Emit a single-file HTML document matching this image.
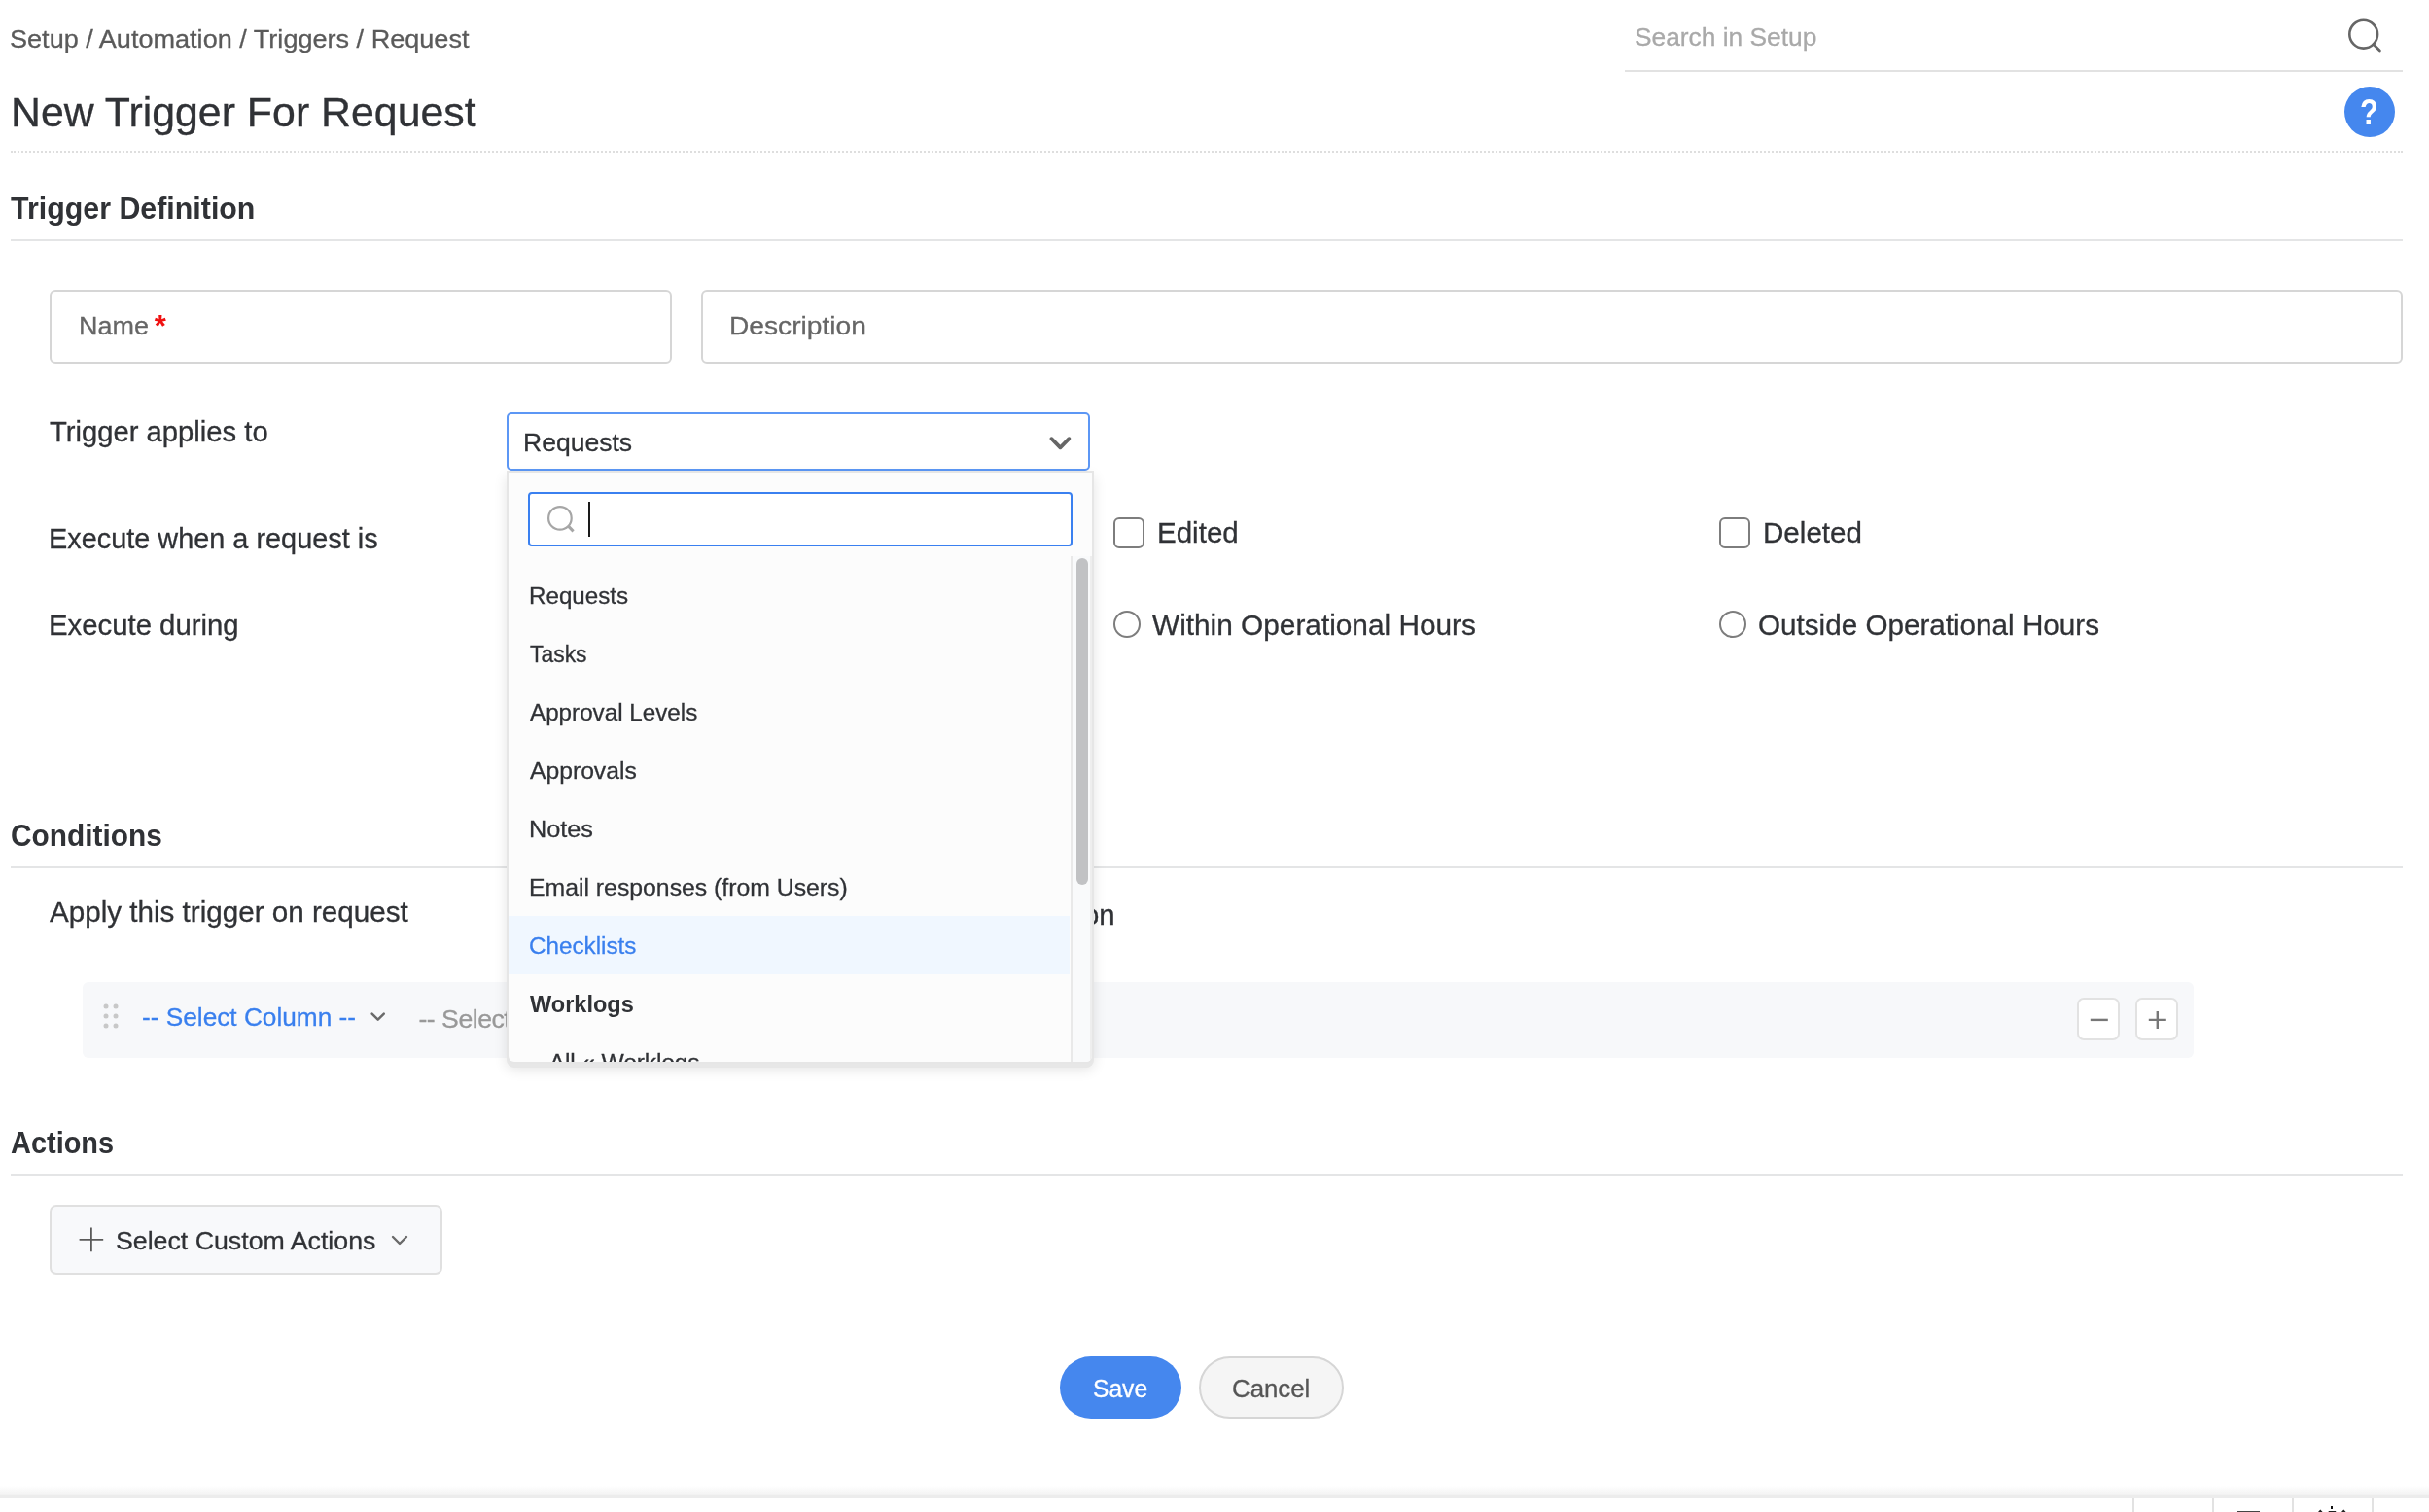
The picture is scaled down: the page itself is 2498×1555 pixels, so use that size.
<!DOCTYPE html>
<html lang="en">
<head>
<meta charset="utf-8">
<title>New Trigger For Request</title>
<style>
html,body{margin:0;padding:0;background:#fff;}
body{width:2498px;height:1555px;position:relative;overflow:hidden;font-family:"Liberation Sans",sans-serif;}
.t{position:absolute;white-space:nowrap;line-height:1;-webkit-text-stroke:0.3px;transform-origin:0 0;}
.b{position:absolute;box-sizing:border-box;}
#page{position:absolute;left:0;top:0;width:2498px;height:1555px;will-change:transform;}
svg{position:absolute;overflow:visible;}
h1,h2,ul,li,p{margin:0;padding:0;font-weight:400;list-style:none;}
</style>
</head>
<body>
<div id="page">
<header>
<nav class="t" aria-label="Breadcrumb" style="left:10.4px;top:27.4px;font-size:26.6px;color:#5a5a5a;transform:scaleX(1.0179);">Setup / Automation / Triggers / Request</nav>
<div class="t" style="left:1680.7px;top:24.5px;font-size:26.6px;color:#a9a9a9;transform:scaleX(0.9899);">Search in Setup</div>
<div class="b" style="left:1671px;top:72px;width:800px;height:2px;background:#e2e2e2;"></div>
<svg style="left:2410px;top:15px" width="44" height="44" viewBox="0 0 44 44"><circle cx="20.7" cy="20.2" r="14.4" fill="none" stroke="#666" stroke-width="2.6"/><path d="M30.8 30.6 L37.4 37.0" stroke="#666" stroke-width="2.8" stroke-linecap="round" fill="none"/></svg>
<h1 class="t" style="left:10.6px;top:93.7px;font-size:43.3px;color:#303236;transform:scaleX(0.9896);">New Trigger For Request</h1>
<div class="b" style="left:2410.7px;top:89px;width:52px;height:52px;border-radius:50%;background:#4587ee;"></div>
<div class="t" style="left:2425.4px;top:96.6px;font-size:37.5px;color:#fff;letter-spacing:0px;font-weight:700;transform:scaleX(0.82);transform-origin:50% 50%;-webkit-text-stroke:0;">?</div>
<div class="b" style="left:11px;top:155px;width:2460px;height:0;border-top:2px dotted #dedede;"></div>
</header>
<main>
<section aria-label="Trigger Definition">
<h2 class="t" style="left:11.1px;top:198.5px;font-size:31.2px;color:#303236;transform:scaleX(0.9739);font-weight:700;-webkit-text-stroke:0;">Trigger Definition</h2>
<div class="b" style="left:11px;top:246px;width:2460px;height:2px;background:#e4e5e6;"></div>
<div class="b" style="left:51px;top:298px;width:640px;height:76px;border:2px solid #d6d6d6;border-radius:6px;background:#fff;"></div>
<div class="t" style="left:81.0px;top:322.2px;font-size:26.6px;color:#666;transform:scaleX(1.013);">Name</div>
<div class="t" style="left:158.7px;top:320.4px;font-size:31px;color:#f01010;letter-spacing:0px;font-weight:700;-webkit-text-stroke:0;">*</div>
<div class="b" style="left:721px;top:298px;width:1750px;height:76px;border:2px solid #d6d6d6;border-radius:6px;background:#fff;"></div>
<div class="t" style="left:749.6px;top:322.2px;font-size:26.6px;color:#666;transform:scaleX(1.0585);">Description</div>
<label class="t" style="left:50.9px;top:429.5px;font-size:28.7px;color:#303236;transform:scaleX(1.0186);">Trigger applies to</label>
<label class="t" style="left:50.4px;top:539.9px;font-size:28.7px;color:#303236;transform:scaleX(1.0063);">Execute when a request is</label>
<label class="t" style="left:50.4px;top:628.7px;font-size:28.7px;color:#303236;transform:scaleX(1.0223);">Execute during</label>
<div class="b" style="left:1145px;top:532px;width:32px;height:32px;border:2px solid #7d7d7d;border-radius:6px;background:#fff;"></div>
<label class="t" style="left:1189.6px;top:534.2px;font-size:28.7px;color:#303236;transform:scaleX(1.0295);">Edited</label>
<div class="b" style="left:1768px;top:532px;width:32px;height:32px;border:2px solid #7d7d7d;border-radius:6px;background:#fff;"></div>
<label class="t" style="left:1813.4px;top:534.2px;font-size:28.7px;color:#303236;transform:scaleX(1.0312);">Deleted</label>
<div class="b" style="left:1145px;top:628px;width:28px;height:28px;border:2px solid #7d7d7d;border-radius:50%;background:#fff;"></div>
<label class="t" style="left:1185.0px;top:628.7px;font-size:28.7px;color:#303236;transform:scaleX(1.0388);">Within Operational Hours</label>
<div class="b" style="left:1768px;top:628px;width:28px;height:28px;border:2px solid #7d7d7d;border-radius:50%;background:#fff;"></div>
<label class="t" style="left:1808.0px;top:628.7px;font-size:28.7px;color:#303236;transform:scaleX(1.0334);">Outside Operational Hours</label>
</section>
<section aria-label="Conditions">
<h2 class="t" style="left:10.8px;top:844.1px;font-size:31.2px;color:#303236;transform:scaleX(0.9571);font-weight:700;-webkit-text-stroke:0;">Conditions</h2>
<div class="b" style="left:11px;top:891px;width:2460px;height:2px;background:#e4e5e6;"></div>
<div class="t" style="left:51.4px;top:923.6px;font-size:28.7px;color:#303236;transform:scaleX(1.0321);">Apply this trigger on request</div>
<div class="t" style="left:1113.5px;top:926.7px;font-size:28.7px;color:#303236;transform:scaleX(1.0233);">on</div>
<div class="b" style="left:85px;top:1010px;width:2171px;height:78px;border-radius:6px;background:#f7f8fa;"></div>
<svg style="left:106.4px;top:1032.4px" width="16" height="26" viewBox="0 0 16 26"><circle cx="3" cy="3" r="2.5" fill="#c8c8c8"/><circle cx="3" cy="13" r="2.5" fill="#c8c8c8"/><circle cx="3" cy="23" r="2.5" fill="#c8c8c8"/><circle cx="13" cy="3" r="2.5" fill="#c8c8c8"/><circle cx="13" cy="13" r="2.5" fill="#c8c8c8"/><circle cx="13" cy="23" r="2.5" fill="#c8c8c8"/></svg>
<div class="t" style="left:146.4px;top:1032.5px;font-size:26.6px;color:#397fee;transform:scaleX(0.986);">-- Select Column --</div>
<svg style="left:380px;top:1040px" width="18" height="12" viewBox="0 0 18 12"><path d="M2.6 2.6 L8.7 8.6 L14.8 2.6" fill="none" stroke="#6a6a6a" stroke-width="2.5" stroke-linecap="round" stroke-linejoin="round"/></svg>
<div class="t" style="left:430.4px;top:1035.3px;font-size:26.6px;color:#999;letter-spacing:-0.46px;">-- Select</div>
<div class="b" style="left:2136px;top:1026px;width:44px;height:44px;border:2px solid #e2e2e2;border-radius:7px;background:#fff;"></div>
<svg style="left:0;top:0" width="1" height="1"><path d="M2149.8 1048.9 H2167.8" stroke="#777" stroke-width="2.4" fill="none"/></svg>
<div class="b" style="left:2196px;top:1026px;width:44px;height:44px;border:2px solid #e2e2e2;border-radius:7px;background:#fff;"></div>
<svg style="left:0;top:0" width="1" height="1"><path d="M2209.8 1048.9 H2227.8 M2218.8 1039.9 V1057.9" stroke="#777" stroke-width="2.4" fill="none"/></svg>
</section>
<section aria-label="Actions">
<h2 class="t" style="left:11.2px;top:1160.3px;font-size:31.2px;color:#303236;transform:scaleX(0.9281);font-weight:700;-webkit-text-stroke:0;">Actions</h2>
<div class="b" style="left:11px;top:1207px;width:2460px;height:2px;background:#e4e5e6;"></div>
<div class="b" style="left:51px;top:1239px;width:404px;height:72px;border:2px solid #e0e0e0;border-radius:7px;background:#f8f9fb;"></div>
<svg style="left:0;top:0" width="1" height="1"><path d="M81.6 1274.9 H106.2 M93.9 1262.5 V1287.3" stroke="#5a5a5a" stroke-width="1.8" fill="none"/></svg>
<div class="t" style="left:118.6px;top:1263.2px;font-size:26.6px;color:#303236;transform:scaleX(1.0049);">Select Custom Actions</div>
<svg style="left:401px;top:1268.5px" width="20" height="13" viewBox="0 0 20 13"><path d="M3 3 L10 10 L17 3" fill="none" stroke="#6a6a6a" stroke-width="2.4" stroke-linecap="round" stroke-linejoin="round"/></svg>
</section>
<div role="group" aria-label="Form buttons">
<div class="b" style="left:1090px;top:1395px;width:125px;height:64px;border-radius:32px;background:#4587ee;"></div>
<div class="t" style="left:1124.3px;top:1414.5px;font-size:26.6px;color:#fff;transform:scaleX(0.9254);">Save</div>
<div class="b" style="left:1233px;top:1395px;width:149px;height:64px;border-radius:32px;background:#f5f5f5;border:2px solid #d6d6d6;"></div>
<div class="t" style="left:1267.2px;top:1414.5px;font-size:26.6px;color:#555;transform:scaleX(0.9704);">Cancel</div>
</div>
</main>
<footer>
<div class="b" style="left:0;top:1528px;width:2498px;height:10px;background:linear-gradient(to bottom,rgba(255,255,255,0),#f1f1f1);"></div>
<div class="b" style="left:0;top:1538px;width:2498px;height:3px;background:#ececec;"></div>
<div class="b" style="left:0;top:1541px;width:2498px;height:14px;background:#fff;"></div>
<div class="b" style="left:2193px;top:1541px;width:2px;height:14px;background:#e2e2e2;"></div>
<div class="b" style="left:2275px;top:1541px;width:2px;height:14px;background:#e2e2e2;"></div>
<div class="b" style="left:2357px;top:1541px;width:2px;height:14px;background:#e2e2e2;"></div>
<div class="b" style="left:2439px;top:1541px;width:2px;height:14px;background:#e2e2e2;"></div>
<div class="b" style="left:2301px;top:1554px;width:23px;height:1px;background:#444;"></div>
<div class="b" style="left:2397px;top:1549px;width:2px;height:3px;background:#111;"></div>
<svg style="left:0;top:0" width="1" height="1"><path d="M2384 1555 L2386.3 1552.6 L2388.6 1555 Z M2408 1555 L2410.3 1552.6 L2412.6 1555 Z M2394.7 1554 H2402.2 V1555 H2394.7 Z" fill="#222"/></svg>
</footer>
<div role="combobox" aria-label="Trigger applies to" aria-expanded="true">
<div class="b" style="left:521px;top:424px;width:600px;height:60px;border:2px solid #5c97f5;border-radius:5px;background:#fff;"></div>
<div class="t" style="left:537.6px;top:441.8px;font-size:26.6px;color:#303236;transform:scaleX(0.9982);">Requests</div>
<svg style="left:1077px;top:446px" width="27" height="20" viewBox="0 0 27 20"><path d="M4.4 5.2 L13.4 14.3 L22.4 5.2" fill="none" stroke="#666" stroke-width="3.8" stroke-linecap="round" stroke-linejoin="round"/></svg>
<div class="b" style="left:523px;top:486px;width:600px;height:606px;background:#fcfcfc;border-radius:0 0 6px 6px;box-shadow:0 0 0 2px #e6e6e6,0 4px 0 2px #e7e7e7,0 6px 14px 2px rgba(0,0,0,0.11);overflow:hidden;">
<div class="b" style="left:20px;top:20px;width:560px;height:56px;border:2px solid #3a80f0;border-radius:4px;background:#fff;"></div>
<svg style="left:37px;top:32px" width="34" height="32" viewBox="0 0 34 32"><circle cx="15.9" cy="14.9" r="11.8" fill="none" stroke="#a6a6a6" stroke-width="2.2"/><path d="M24 22.6 L29.6 28.4" stroke="#a6a6a6" stroke-width="3" fill="none"/></svg>
<div class="b" style="left:82px;top:30px;width:2px;height:36px;background:#1a1a1a;"></div>
<div class="b" style="left:0;top:456px;width:577px;height:60px;background:#f0f7ff;"></div>
<ul role="listbox">
<li class="t" role="option" style="left:20.6px;top:115.0px;font-size:24.6px;color:#303236;transform:scaleX(0.9825);">Requests</li>
<li class="t" role="option" style="left:21.6px;top:175.0px;font-size:24.6px;color:#303236;transform:scaleX(0.9317);">Tasks</li>
<li class="t" role="option" style="left:21.6px;top:235.0px;font-size:24.6px;color:#303236;transform:scaleX(0.9846);">Approval Levels</li>
<li class="t" role="option" style="left:21.6px;top:295.0px;font-size:24.6px;color:#303236;transform:scaleX(1.0037);">Approvals</li>
<li class="t" role="option" style="left:20.6px;top:355.0px;font-size:24.6px;color:#303236;transform:scaleX(1.027);">Notes</li>
<li class="t" role="option" style="left:20.6px;top:415.0px;font-size:24.6px;color:#303236;transform:scaleX(1.0077);">Email responses (from Users)</li>
<li class="t" role="option" style="left:20.6px;top:475.0px;font-size:24.6px;color:#397fee;transform:scaleX(0.9856);">Checklists</li>
<li class="t" role="option" style="left:21.6px;top:535.0px;font-size:24.6px;color:#303236;transform:scaleX(0.9568);font-weight:700;-webkit-text-stroke:0;">Worklogs</li>
<li class="t" role="option" style="left:41.8px;top:595.0px;font-size:24.6px;color:#303236;letter-spacing:-0.15px;">All « Worklogs</li>
</ul>
<div class="b" style="left:578px;top:86px;width:2px;height:520px;background:#e9e9e9;"></div>
<div class="b" style="left:580px;top:86px;width:18px;height:520px;background:#f9fafb;"></div>
<div class="b" style="left:598px;top:86px;width:2px;height:520px;background:#eeeeee;"></div>
<div class="b" style="left:584px;top:88px;width:12px;height:336px;border-radius:6px;background:#c1c2c4;"></div>
</div>
</div>
</div>
</body>
</html>
